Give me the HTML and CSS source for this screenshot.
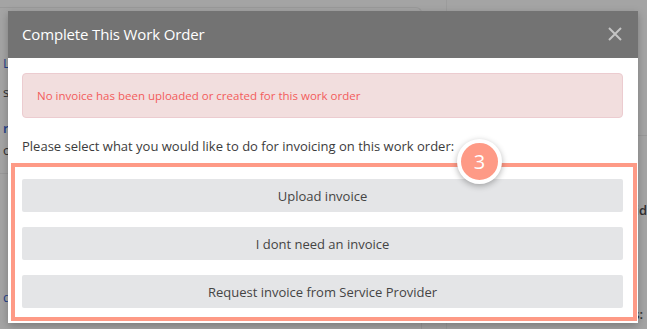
FILE: index.html
```html
<!DOCTYPE html>
<html lang="en">
<head>
  <meta charset="UTF-8">
  <title>Complete This Work Order</title>
  <meta name="viewport" content="width=device-width, initial-scale=1">
  <link rel="stylesheet" href="styles.css">
</head>
<body>

<div class="page">
  <div class="page-left">
    <div class="page-card">
      <div class="frag frag-link frag-l">L</div>
      <div class="frag frag-deg">s°,</div>
      <div class="frag frag-link frag-bold frag-rl">rl</div>
      <div class="frag frag-os">os</div>
      <div class="frag-line"></div>
      <div class="frag frag-link">d</div>
    </div>
  </div>
  <div class="page-right">
    <div class="frag-line frag-line-right"></div>
    <div class="frag frag-bold frag-id">id</div>
    <div class="frag frag-bold frag-s">s:</div>
  </div>
</div>

<div class="modal">
  <div class="modal-header">
    <h4>Complete This Work Order</h4>
    <span class="close">
      <svg width="14" height="14" viewBox="0 0 14 14">
        <path d="M1 1 L13 13 M13 1 L1 13" stroke="#c4c4c4" stroke-width="2" fill="none"/>
      </svg>
    </span>
  </div>
  <div class="modal-body">
    <div class="alert">No invoice has been uploaded or created for this work order</div>
    <p class="prompt">Please select what you would like to do for invoicing on this work order:</p>
    <div class="highlight">
      <button class="option">Upload invoice</button>
      <button class="option">I dont need an invoice</button>
      <button class="option">Request invoice from Service Provider</button>
    </div>
  </div>
  <div class="step-badge">3</div>
</div>

</body>
</html>
```

FILE: styles.css
```css
* {
  box-sizing: border-box;
  margin: 0;
  padding: 0;
}

body {
  font-family: 'Open Sans', 'Segoe UI', sans-serif;
  background: #a4a4a4;
  width: 647px;
  height: 329px;
  overflow: hidden;
  position: relative;
}

/* dimmed page behind the modal */
.page {
  display: flex;
  height: 329px;
}

.page-left {
  width: 450px;
  border-right: 1px solid #9c9c9c;
  padding-top: 7px;
}

.page-card {
  width: 422px;
  height: 330px;
  border-top: 1px solid #999;
  border-right: 1px solid #999;
  border-radius: 0 6px 0 0;
  padding-top: 46px;
  font-size: 13px;
  color: #2f2f2f;
}

.frag {
  padding-left: 3px;
  line-height: 18px;
}

.frag-link {
  color: #23418a;
}

.frag-bold {
  font-weight: 600;
}

.frag-deg {
  margin-top: 11px;
}

.frag-rl {
  margin-top: 18px;
}

.frag-os {
  margin-top: 4px;
}

.frag-line {
  height: 1px;
  background: #999;
  margin: 14px 0 114px;
}

.page-right {
  flex: 1;
  padding-top: 135px;
  font-size: 13px;
  color: #2f2f2f;
}

.frag-line-right {
  margin: 0;
}

.frag-id {
  padding-left: 188px;
  margin-top: 65px;
}

.frag-s {
  padding-left: 186px;
  margin-top: 86px;
}

/* modal */
.modal {
  position: absolute;
  left: 8px;
  top: 11px;
  width: 630px;
  background: white;
  box-shadow: 0 3px 8px rgba(0, 0, 0, 0.25);
}

.modal-header {
  background: #737373;
  height: 47px;
  display: flex;
  align-items: center;
  justify-content: space-between;
  padding: 0 15px 2px 14px;
}

.modal-header h4 {
  color: white;
  font-family: 'Open Sans', sans-serif;
  font-weight: 400;
  font-size: 15px;
  letter-spacing: -0.15px;
}

.close {
  display: flex;
  margin-right: 1px;
}

.modal-body {
  padding: 15px 15px 2px 14px;
}

.alert {
  background: #f2dede;
  border: 1px solid #ecccd0;
  border-radius: 4px;
  height: 45px;
  display: flex;
  align-items: center;
  padding-left: 14px;
  color: #f25c5c;
  font-size: 11.5px;
}

.prompt {
  font-size: 13px;
  color: #3c3c3c;
  margin: 19px 0 8px;
  line-height: 18px;
}

.highlight {
  border: 4px solid #fe9a86;
  margin: 0 -14px 0 -11px;
  padding: 12px 10px 9px 7px;
  display: flex;
  flex-direction: column;
  gap: 15px;
}

.option {
  height: 33px;
  background: #e4e5e7;
  border: none;
  border-radius: 2px;
  font-family: 'Open Sans', 'Segoe UI', sans-serif;
  font-size: 13px;
  color: #444;
  cursor: pointer;
}

.step-badge {
  position: absolute;
  left: 449px;
  top: 128px;
  width: 45px;
  height: 45px;
  border-radius: 50%;
  background: #fe9a86;
  border: 4px solid white;
  box-shadow: 0 2px 6px rgba(0, 0, 0, 0.3);
  color: white;
  font-size: 20px;
  display: flex;
  align-items: center;
  justify-content: center;
}
```
